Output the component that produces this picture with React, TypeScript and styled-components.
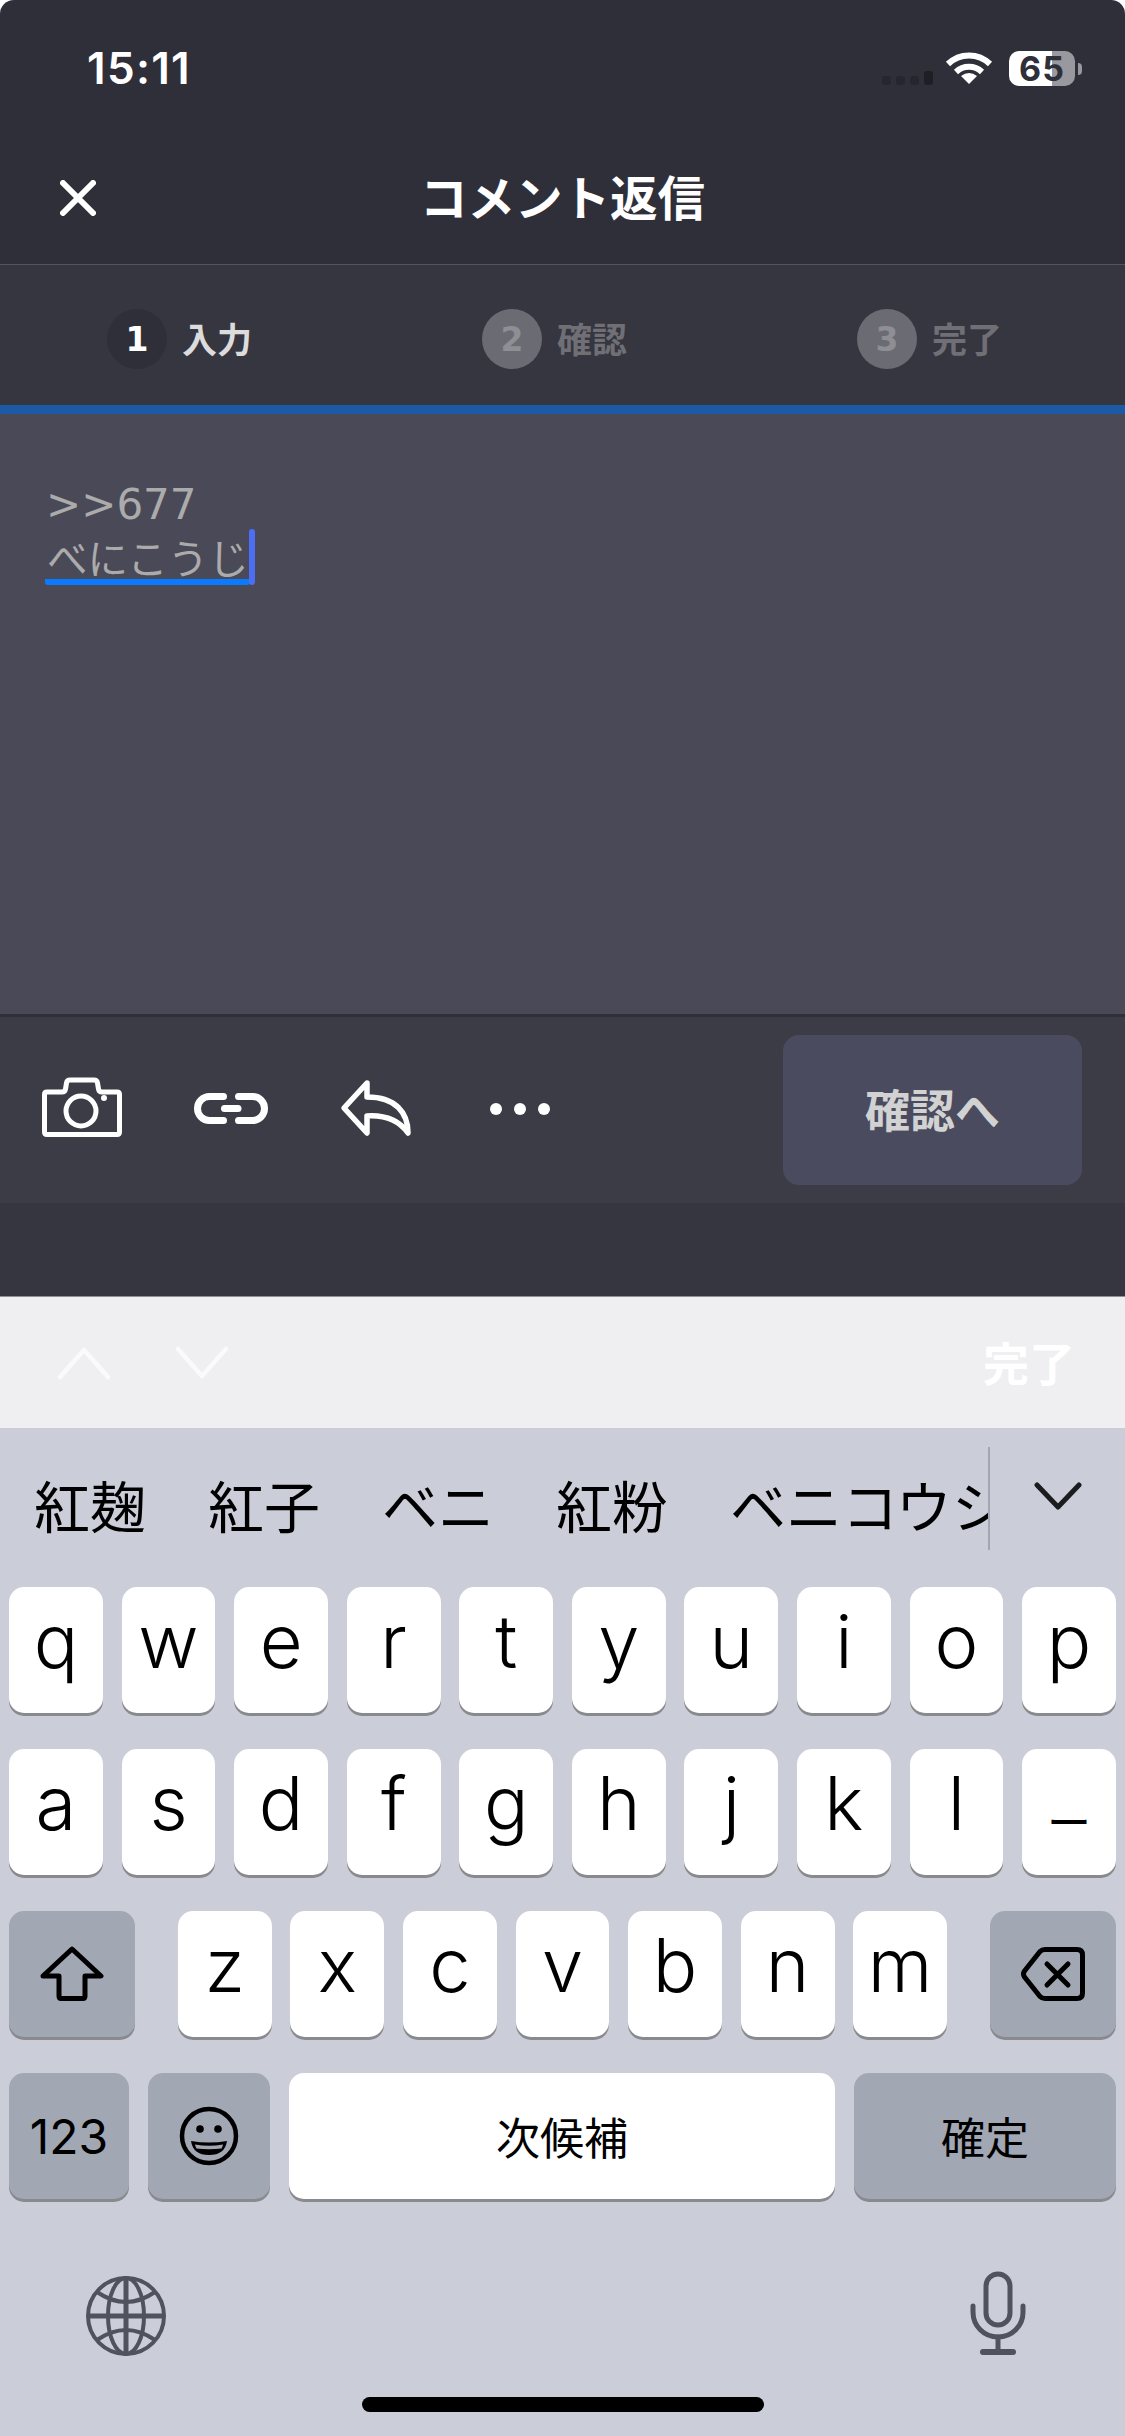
import { ReactElement } from 'react';
import styled, { createGlobalStyle } from 'styled-components';

const JP = `"Noto Sans CJK JP", "Noto Sans", sans-serif`;

const GlobalStyle = createGlobalStyle`
  html, body {
    margin: 0;
    padding: 0;
    background: #fff;
  }
  * {
    box-sizing: border-box;
  }
`;

const Phone = styled.div`
  width: 1125px;
  height: 2436px;
  overflow: hidden;
  display: flex;
  flex-flow: column;
  border-radius: 14px 14px 0 0;
  background: #2f2f3a;
  font-family: ${JP};
`;

const StatusBar = styled.div`
  height: 132px;
  padding: 4px 50px 0 87px;
  display: flex;
  align-items: center;
  justify-content: space-between;
  flex: none;
`;

const Clock = styled.div`
  font-family: Inter, sans-serif;
  font-size: 44px;
  font-weight: 600;
  color: #fff;
  letter-spacing: 1.3px;
`;

const StatusIcons = styled.div`
  display: flex;
  align-items: center;
`;

const SignalDots = styled.div`
  display: flex;
  align-items: flex-end;
  gap: 5px;
  height: 34px;
  margin-right: 12px;
`;

const SignalDot = styled.div<{ $tall?: boolean }>`
  width: 9px;
  height: ${(p) => (p.$tall ? 14 : 9)}px;
  border-radius: 3px;
  background: ${(p) => (p.$tall ? '#1e1e24' : '#26262e')};
`;

const Battery = styled.div`
  position: relative;
  width: 66px;
  height: 35px;
  margin-left: 16px;
  border-radius: 10px;
  background: linear-gradient(90deg, #fff 0 43px, #98989e 43px 100%);
  color: #2f2f3a;
  font-family: Inter, sans-serif;
  font-size: 34px;
  font-weight: 700;
  letter-spacing: 1px;
  line-height: 35px;
  text-align: center;

  &::after {
    content: '';
    position: absolute;
    left: 69px;
    top: 12px;
    width: 4px;
    height: 12px;
    border-radius: 0 4px 4px 0;
    background: #98989e;
  }
`;

const NavBar = styled.div`
  height: 133px;
  padding-left: 60px;
  display: grid;
  grid-template-columns: 1fr auto 1fr;
  align-items: center;
  border-bottom: 1px solid #54545e;
  flex: none;
`;

const NavTitle = styled.div`
  font-size: 47.5px;
  font-weight: 700;
  color: #fff;
  margin-left: -60px;
  padding-bottom: 6px;
`;

const Stepper = styled.div`
  height: 149px;
  padding-top: 8px;
  display: grid;
  grid-template-columns: repeat(3, 375px);
  background: #363640;
  border-bottom: 9px solid #1d5aa5;
  flex: none;
`;

const Step = styled.div`
  display: flex;
  align-items: center;
  justify-content: center;
  gap: 15px;
  padding-right: 16px;
`;

const StepNumber = styled.div<{ $active?: boolean }>`
  width: 60px;
  height: 60px;
  border-radius: 50%;
  display: flex;
  align-items: center;
  justify-content: center;
  background: ${(p) => (p.$active ? '#2f2f3a' : '#6b6b73')};
  color: ${(p) => (p.$active ? '#fff' : '#8e8e94')};
  font-family: 'DejaVu Sans', sans-serif;
  font-size: 33px;
  font-weight: 700;
`;

const StepLabel = styled.div<{ $active?: boolean }>`
  padding-bottom: 4px;
  font-size: 35px;
  font-weight: 700;
  color: ${(p) => (p.$active ? '#dcdcdc' : '#6f6f75')};
`;

const Editor = styled.div`
  height: 600px;
  padding: 64px 0 0 46px;
  background: #4a4957;
  color: #ababab;
  font-family: 'DejaVu Sans', ${JP};
  font-size: 42px;
  line-height: 54px;
  flex: none;
`;

const Composing = styled.span`
  position: relative;
  display: inline-block;
  height: 53px;
  margin-left: -1px;
  padding: 0 1px 0 2px;
  border-bottom: 6px solid #0a7aff;
  border-radius: 0 0 3px 3px;
  font-family: ${JP};
  font-size: 40.5px;
  line-height: 50px;

  &::after {
    content: '';
    position: absolute;
    right: -5px;
    bottom: -6px;
    width: 6px;
    height: 56px;
    border-radius: 3px;
    background: #4b6ef5;
  }
`;

const Toolbar = styled.div`
  height: 189px;
  padding: 0 43px 0 42px;
  display: flex;
  align-items: center;
  gap: 72px;
  background: #3c3c47;
  border-top: 3px solid #2f2f3a;
  flex: none;
`;

const ConfirmButton = styled.div`
  width: 299px;
  height: 150px;
  margin-left: auto;
  padding-bottom: 4px;
  display: flex;
  align-items: center;
  justify-content: center;
  border-radius: 16px;
  background: #4b4b5f;
  color: #d2d2d2;
  font-size: 45px;
  font-weight: 700;
`;

const ToolbarFill = styled.div`
  height: 93px;
  background: #363640;
  flex: none;
`;

const AccessoryBar = styled.div`
  height: 132px;
  padding: 0 50px 0 57px;
  display: flex;
  align-items: center;
  gap: 64px;
  background: #efeff1;
  border-top: 1px solid #8f8f96;
  flex: none;
`;

const DoneLabel = styled.div`
  margin-left: auto;
  padding-bottom: 3px;
  color: #fff;
  font-size: 46px;
  font-weight: 700;
`;

const Keyboard = styled.div`
  flex: 1;
  display: flex;
  flex-flow: column;
  background: #cbced8;
`;

const CandidateBar = styled.div`
  height: 159px;
  padding-bottom: 8px;
  display: flex;
  align-items: center;
  flex: none;
`;

const CandidateList = styled.div`
  width: 988px;
  padding-left: 34px;
  display: flex;
  gap: 62px;
  overflow: hidden;
  font-size: 56px;
  color: #000;
  white-space: nowrap;
  flex: none;
`;

const CandidateToggle = styled.div`
  flex: 1;
  height: 103px;
  align-self: flex-start;
  margin-top: 19px;
  display: flex;
  justify-content: center;
  padding-top: 35px;
  border-left: 2px solid #a3a6b0;
`;

const KeyRows = styled.div`
  padding: 0 9px;
  display: flex;
  flex-flow: column;
  gap: 36px;
`;

const KeyRow = styled.div`
  display: flex;
  justify-content: space-between;
  height: 126px;
`;

const LetterGroup = styled.div`
  display: flex;
  gap: 18.67px;
`;

const Key = styled.div<{ $width?: number }>`
  width: ${(p) => p.$width ?? 93.9}px;
  height: 126px;
  padding-bottom: 18px;
  display: flex;
  align-items: center;
  justify-content: center;
  border-radius: 15px;
  background: #fff;
  box-shadow: 0 3px 0 #898a8d;
  color: #000;
  font-family: Inter, sans-serif;
  font-size: 74px;
  font-weight: 300;
  flex: none;
`;

const ActionKey = styled(Key)<{ $dark?: boolean }>`
  padding-bottom: 0;
  background: ${(p) => (p.$dark ? '#a2a7b4' : '#fff')};
`;

const KeyText = styled.span<{ $size: number }>`
  font-family: ${JP};
  font-size: ${(p) => p.$size}px;
  font-weight: 400;
`;

const DashText = styled(KeyText)`
  padding-top: 16px;
`;

const NumberLabel = styled.span`
  font-size: 48px;
  font-weight: 400;
`;

const KeyboardTray = styled.div`
  margin-top: 72px;
  padding: 0 99px 0 86px;
  display: flex;
  align-items: center;
  justify-content: space-between;
  height: 84px;
`;

const GlobeSlot = styled.div`
  padding-top: 6px;
`;

const HomeBar = styled.div`
  width: 402px;
  height: 15px;
  margin: 42px auto 0;
  border-radius: 8px;
  background: #000;
`;

const Icon = styled.svg`
  display: block;
  flex: none;
`;

const WifiIcon = () => (
  <Icon width="48" height="34" viewBox="0 0 48 34" fill="none" stroke="#fff" strokeWidth="6">
    <path d="M3 13 A30 30 0 0 1 45 13" />
    <path d="M11 21 A19 19 0 0 1 37 21" />
    <path d="M24 33 L16 25 Q24 19 32 25 Z" fill="#fff" stroke="none" />
  </Icon>
);

const CloseIcon = () => (
  <Icon width="36" height="36" viewBox="0 0 36 36" fill="none" stroke="#fff" strokeWidth="6" strokeLinecap="round">
    <path d="M3 3 L33 33 M33 3 L3 33" />
  </Icon>
);

const CameraIcon = () => (
  <Icon width="80" height="66" viewBox="0 0 80 66" fill="none" stroke="#fff" strokeWidth="5" strokeLinejoin="round">
    <path d="M5 15 H20 Q23 15 23.5 12 L24.5 6 Q25 3 28 3 H52 Q55 3 55.5 6 L56.5 12 Q57 15 60 15 H75 Q77.5 15 77.5 17.5 V55 Q77.5 57.5 75 57.5 H5 Q2.5 57.5 2.5 55 V17.5 Q2.5 15 5 15 Z" />
    <circle cx="39" cy="34" r="15" />
    <circle cx="62" cy="21" r="3" fill="#fff" stroke="none" />
  </Icon>
);

const LinkIcon = () => (
  <Icon width="74" height="66" viewBox="0 0 74 66" fill="none" stroke="#fff" strokeWidth="7" strokeLinecap="round">
    <g transform="translate(0 16)">
      <path d="M29.5 3.5 H15.5 A12 12 0 0 0 15.5 27.5 H29.5" />
      <path d="M44.5 3.5 H58.5 A12 12 0 0 1 58.5 27.5 H44.5" />
      <path d="M30.5 15.5 H44" />
    </g>
  </Icon>
);

const ReplyIcon = () => (
  <Icon width="72" height="66" viewBox="0 0 72 66" fill="none" stroke="#fff" strokeWidth="5.5" strokeLinejoin="round">
    <path d="M27 6 L4 31 L27 56 L27 39 C 44 38 58 42 68 56 C 68 36 56 20 27 20 Z" />
  </Icon>
);

const DotsIcon = () => (
  <Icon width="66" height="66" viewBox="0 0 66 66" fill="#fff">
    <circle cx="12" cy="32" r="6" />
    <circle cx="36" cy="32" r="6" />
    <circle cx="60" cy="32" r="6" />
  </Icon>
);

const Chevron = ({ up }: { up?: boolean }) => (
  <Icon width="54" height="34" viewBox="0 0 54 34" fill="none" stroke="#fafafa" strokeWidth="4.5" strokeLinecap="round" strokeLinejoin="round">
    <path d={up ? 'M3 31 L27 4 L51 31' : 'M3 3 L27 30 L51 3'} />
  </Icon>
);

const ToggleChevron = () => (
  <Icon width="48" height="28" viewBox="0 0 48 28" fill="none" stroke="#1c1c1e" strokeWidth="5" strokeLinecap="round" strokeLinejoin="round">
    <path d="M3 3 L24 25 L45 3" />
  </Icon>
);

const ShiftIcon = () => (
  <Icon width="64" height="56" viewBox="0 0 64 56" fill="none" stroke="#000" strokeWidth="5" strokeLinejoin="round">
    <path d="M32 3 L61 30 H45 V50 Q45 52.5 43 52.5 H21 Q19 52.5 19 50 V30 H3 Z" />
  </Icon>
);

const DeleteIcon = () => (
  <Icon width="65" height="54" viewBox="0 0 65 54" fill="none" stroke="#000" strokeWidth="5" strokeLinecap="round" strokeLinejoin="round">
    <path d="M25 2.5 H57 Q62.5 2.5 62.5 8 V46 Q62.5 51.5 57 51.5 H25 Q22 51.5 20 49.5 L4.5 30 Q2.5 27 4.5 24 L20 4.5 Q22 2.5 25 2.5 Z" />
    <path d="M27 17 L48 38 M48 17 L27 38" />
  </Icon>
);

const EmojiIcon = () => (
  <Icon width="60" height="60" viewBox="0 0 60 60" fill="none" stroke="#000" strokeWidth="4.5">
    <circle cx="30" cy="30" r="27" />
    <circle cx="21" cy="23" r="3.8" fill="#000" stroke="none" />
    <circle cx="39" cy="23" r="3.8" fill="#000" stroke="none" />
    <path d="M12 35 Q30 38 48 35 Q46 49 30 49 Q14 49 12 35 Z" fill="#000" stroke="none" />
    <path d="M16 38.5 Q30 41 44 38.5 Q43.5 41 42.5 42.5 Q30 44 17.5 42.5 Q16.5 41 16 38.5 Z" fill="#a2a7b4" stroke="none" />
  </Icon>
);

const GlobeIcon = () => (
  <Icon width="80" height="80" viewBox="0 0 80 80" fill="none" stroke="#50535d" strokeWidth="4">
    <circle cx="40" cy="40" r="38" />
    <ellipse cx="40" cy="40" rx="18" ry="38" />
    <path d="M40 2 V78 M2 40 H78" strokeWidth="5" />
    <path d="M11 16 Q40 36 69 16 M11 64 Q40 44 69 64" />
  </Icon>
);

const MicIcon = () => (
  <Icon width="56" height="84" viewBox="0 0 56 84" fill="none" stroke="#50535d" strokeWidth="5" strokeLinecap="round">
    <rect x="16" y="3" width="24" height="51" rx="12" />
    <path d="M3 35 V41 C3 55 14 66 28 66 C42 66 53 55 53 41 V35" />
    <path d="M28 66 V79" />
    <path d="M13 81 H43" strokeWidth="6" />
  </Icon>
);

const rowOne = ['q', 'w', 'e', 'r', 't', 'y', 'u', 'i', 'o', 'p'];
const rowTwo = ['a', 's', 'd', 'f', 'g', 'h', 'j', 'k', 'l'];
const rowThree = ['z', 'x', 'c', 'v', 'b', 'n', 'm'];
const candidates = ['紅麹', '紅子', 'ベニ', '紅粉', 'ベニコウシ'];

function App(): ReactElement {
  return (
    <>
      <GlobalStyle />
      <Phone>
        <StatusBar>
          <Clock>15:11</Clock>
          <StatusIcons>
            <SignalDots>
              <SignalDot />
              <SignalDot />
              <SignalDot />
              <SignalDot $tall />
            </SignalDots>
            <WifiIcon />
            <Battery>65</Battery>
          </StatusIcons>
        </StatusBar>
        <NavBar>
          <CloseIcon />
          <NavTitle>コメント返信</NavTitle>
        </NavBar>
        <Stepper>
          <Step>
            <StepNumber $active>1</StepNumber>
            <StepLabel $active>入力</StepLabel>
          </Step>
          <Step>
            <StepNumber>2</StepNumber>
            <StepLabel>確認</StepLabel>
          </Step>
          <Step>
            <StepNumber>3</StepNumber>
            <StepLabel>完了</StepLabel>
          </Step>
        </Stepper>
        <Editor>
          <div>&gt;&gt;677</div>
          <Composing>べにこうじ</Composing>
        </Editor>
        <Toolbar>
          <CameraIcon />
          <LinkIcon />
          <ReplyIcon />
          <DotsIcon />
          <ConfirmButton>確認へ</ConfirmButton>
        </Toolbar>
        <ToolbarFill />
        <AccessoryBar>
          <Chevron up />
          <Chevron />
          <DoneLabel>完了</DoneLabel>
        </AccessoryBar>
        <Keyboard>
          <CandidateBar>
            <CandidateList>
              {candidates.map((word) => (
                <span key={word}>{word}</span>
              ))}
            </CandidateList>
            <CandidateToggle>
              <ToggleChevron />
            </CandidateToggle>
          </CandidateBar>
          <KeyRows>
            <KeyRow>
              {rowOne.map((letter) => (
                <Key key={letter}>{letter}</Key>
              ))}
            </KeyRow>
            <KeyRow>
              {rowTwo.map((letter) => (
                <Key key={letter}>{letter}</Key>
              ))}
              <ActionKey>
                <DashText $size={44}>ー</DashText>
              </ActionKey>
            </KeyRow>
            <KeyRow>
              <ActionKey $dark $width={126}>
                <ShiftIcon />
              </ActionKey>
              <LetterGroup>
                {rowThree.map((letter) => (
                  <Key key={letter}>{letter}</Key>
                ))}
              </LetterGroup>
              <ActionKey $dark $width={126}>
                <DeleteIcon />
              </ActionKey>
            </KeyRow>
            <KeyRow>
              <ActionKey $dark $width={120}>
                <NumberLabel>123</NumberLabel>
              </ActionKey>
              <ActionKey $dark $width={122}>
                <EmojiIcon />
              </ActionKey>
              <ActionKey $width={546}>
                <KeyText $size={44}>次候補</KeyText>
              </ActionKey>
              <ActionKey $dark $width={262}>
                <KeyText $size={44}>確定</KeyText>
              </ActionKey>
            </KeyRow>
          </KeyRows>
          <KeyboardTray>
            <GlobeSlot>
              <GlobeIcon />
            </GlobeSlot>
            <MicIcon />
          </KeyboardTray>
          <HomeBar />
        </Keyboard>
      </Phone>
    </>
  );
}

export default App;
